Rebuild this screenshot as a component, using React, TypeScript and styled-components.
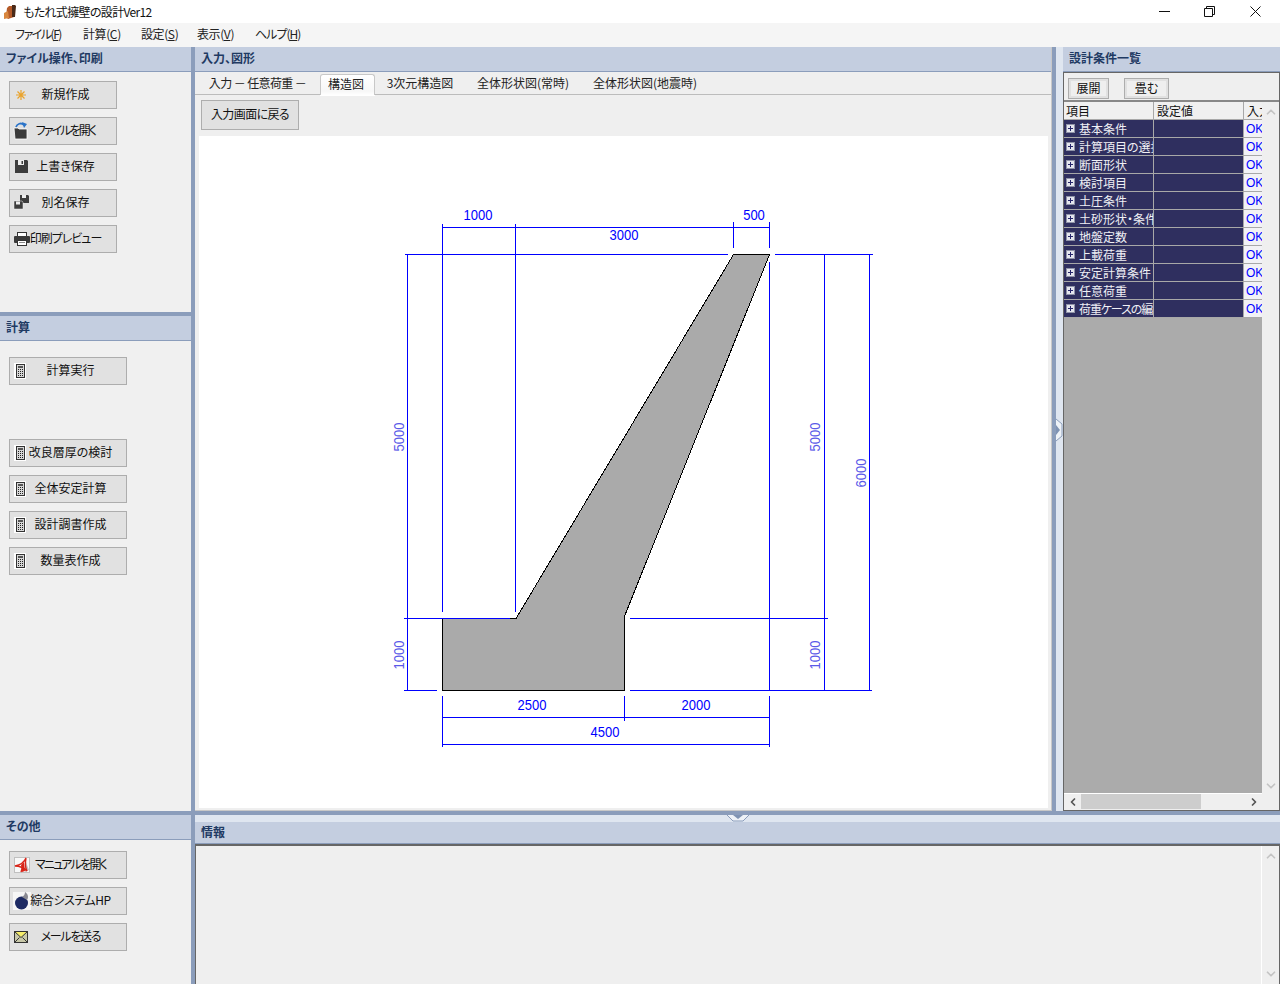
import React from "react";
import styled, { createGlobalStyle } from "styled-components";
import { ChevronUp, ChevronDown, ChevronLeft, ChevronRight } from "lucide-react";

const Global = createGlobalStyle`
  html, body { margin: 0; padding: 0; overflow: hidden; background: #f0f0f0; }
  * { box-sizing: border-box; }
  body {
    font-family: "Noto Sans CJK JP", "Liberation Sans", sans-serif;
    font-size: 12px;
    font-feature-settings: "palt";
    color: #111;
  }
`;

const Win = styled.div`
  width: 1280px; height: 984px;
  display: grid;
  grid-template-rows: 23px 24px 1fr;
  overflow: hidden;
`;
const TitleBar = styled.div`
  background: #fff; display: flex; align-items: center; padding: 0 2px 0 3px;
`;
const TitleText = styled.span`
  margin-left: 4px; flex: 1; line-height: 23px; color: #111; letter-spacing: -0.65px;
`;
const WinBtn = styled.span`
  width: 45.5px; height: 23px; display: flex; align-items: center; justify-content: center;
`;
const MenuBar = styled.div`
  background: #f5f5f5; display: flex; align-items: center; padding-left: 15px;
`;
const MenuItem = styled.span<{ $w: number; $ls?: number }>`
  width: ${(p) => p.$w}px; line-height: 22px; height: 24px; color: #222; white-space: nowrap;
  letter-spacing: ${(p) => p.$ls ?? -0.4}px;
  u { text-underline-offset: 1px; }
`;
const Work = styled.div`
  display: grid; grid-template-columns: 191px 4px 1fr; min-height: 0; position: relative;
`;
const VSplit = styled.div` background: #8b9dbb; `;
const HSplit = styled.div` background: #8b9dbb; height: 4px; flex: none; `;
const LeftCol = styled.div` display: flex; flex-direction: column; min-height: 0; `;
const Section = styled.section<{ $h: number; $pt: number }>`
  height: ${(p) => p.$h}px; flex: none; background: #f0f0f0;
  display: flex; flex-direction: column; align-items: flex-start;
  > div:last-child { padding-top: ${(p) => p.$pt}px; }
`;
const Header = styled.div<{ $h?: number; $px?: number }>`
  height: ${(p) => p.$h ?? 25}px; width: 100%; flex: none;
  background: #c4cee0; border-bottom: 1px solid #8b9dbb;
  font-weight: 700; color: #1f3a63; line-height: ${(p) => (p.$h ?? 25) - 3}px;
  padding-left: ${(p) => p.$px ?? 6}px;
`;
const BtnList = styled.div`
  display: flex; flex-direction: column; gap: 8px; padding-left: 9px;
`;
const ActionBtn = styled.button<{ $w: number; $mt?: number; $ls?: number }>`
  width: ${(p) => p.$w}px; height: 28px; margin: ${(p) => p.$mt ?? 0}px 0 0; padding: 0 0 0 5px;
  background: #e1e1e1; border: 1px solid #adadad;
  display: grid; align-items: center;
  font: inherit; color: #111;
  > * { grid-area: 1 / 1; }
  > svg { justify-self: start; margin-left: -2px; }
  > span {
    justify-self: center; white-space: nowrap; padding-bottom: 3px;
    letter-spacing: ${(p) => p.$ls ?? 0}px;
  }
`;
const MainCol = styled.div` display: flex; flex-direction: column; min-width: 0; min-height: 0; `;
const TopRow = styled.div`
  height: 764px; flex: none; display: grid; grid-template-columns: 857px 4px 7px 1fr;
`;
const Center = styled.div`
  display: flex; flex-direction: column; background: #efefef; min-height: 0;
  border-right: 1px solid #c8c8c8; border-bottom: 1px solid #c8c8c8;
`;
const Tabs = styled.div`
  height: 23px; flex: none; display: flex; align-items: flex-end; background: #efefef;
  border-bottom: 1px solid #bcbcbc;
`;
const Tab = styled.div<{ $w: number; $active?: boolean; $ls?: number }>`
  width: ${(p) => p.$w}px; height: ${(p) => (p.$active ? "21px" : "20px")}; text-align: center;
  line-height: 17px; white-space: nowrap; color: #222;
  letter-spacing: ${(p) => p.$ls ?? 0}px;
  ${(p) =>
    p.$active
      ? `padding-right: 3px; background: linear-gradient(#fff, #f7f7f7 80%, #fff); border: 1px solid #c8c8c8; border-bottom: 0; border-radius: 3px 3px 0 0; margin-bottom: -1px; box-shadow: 0 1px 0 #fff;`
      : ""}
`;
const ToolRow = styled.div` height: 41px; flex: none; padding: 5px 0 0 6px; `;
const PlainBtn = styled.button`
  width: 98px; height: 30px; background: #e1e1e1; border: 1px solid #adadad;
  padding: 0 0 3px; font: inherit; color: #111; white-space: nowrap; letter-spacing: -0.6px;
`;
const Canvas = styled.div`
  margin: 0 3px 0 4px; height: 672px; background: #fff; flex: none;
  svg { display: block; }
`;
const Strip = styled.div` background: #dfe6f0; `;
const Right = styled.div` display: flex; flex-direction: column; background: #efefef; min-height: 0; `;
const RightFrame = styled.div`
  flex: 1; min-height: 0; display: flex; flex-direction: column;
  border: 1px solid #666;
`;
const RightTools = styled.div`
  height: 29px; flex: none; display: flex; gap: 15px; padding: 5px 0 0 4px; border-bottom: 2px solid #888;
`;
const MiniBtn = styled.button<{ $w: number }>`
  width: ${(p) => p.$w}px; height: 21px; padding: 0 0 2px; font: inherit; color: #111;
  background: #efefef; border: 1px solid #adadad; box-shadow: inset 0 0 0 2px #e1e1e1;
`;
const RightBody = styled.div` flex: 1; min-height: 0; display: grid; grid-template-columns: 198px 1fr; `;
const TableCol = styled.div` display: flex; flex-direction: column; min-height: 0; `;
const TableArea = styled.div` flex: 1; background: #ababab; border-bottom: 1px solid #fff; min-height: 0; `;
const Row = styled.div`
  display: grid; grid-template-columns: 90px 90px 18px; height: 18px;
  border-bottom: 1px solid #a8a8a8;
`;
const HeadRow = styled(Row)` background: #f0f0f0; `;
const HeadCell = styled.div<{ $pl: number; $line?: boolean }>`
  padding-left: ${(p) => p.$pl}px; line-height: 17px; overflow: hidden; white-space: nowrap; color: #111;
  ${(p) => (p.$line ? "border-right: 1px solid #a8a8a8;" : "")}
`;
const NameCell = styled.div<{ $tight?: boolean }>`
  background: #2f2f5f; color: #f0f0f5; display: flex; align-items: center; gap: 4px;
  padding-left: 2px; overflow: hidden; white-space: nowrap; border-right: 1px solid #a8a8a8; line-height: 17px;
  letter-spacing: ${(p) => (p.$tight ? "-1.1px" : "0")};
`;
const Plus = styled.span`
  width: 9px; height: 9px; flex: none; background: #e4e6ee; border: 1px solid #8f93a8; position: relative;
  &::before, &::after { content: ""; position: absolute; background: #24246a; }
  &::before { left: 1px; right: 1px; top: 3px; height: 1px; }
  &::after { top: 1px; bottom: 1px; left: 3px; width: 1px; }
`;
const ValueCell = styled.div` background: #2f2f5f; border-right: 1px solid #a8a8a8; `;
const OkCell = styled.div`
  background: #f2f2f6; color: #0000ff; padding-left: 2px; line-height: 19px; overflow: hidden;
  font-family: "Liberation Sans", sans-serif; font-size: 12px;
`;
const HScroll = styled.div`
  height: 16px; flex: none; display: grid; grid-template-columns: 17px 120px 1fr 17px; align-items: stretch;
  color: #555; > span { display: flex; align-items: center; justify-content: center; }
`;
const Thumb = styled.div` background: #cdcdcd; margin-bottom: 1px; `;
const VScroll = styled.div`
  display: flex; flex-direction: column; justify-content: space-between; align-items: center;
  color: #c4c4c4; padding: 3px 0;
`;
const BottomSplit = styled.div` height: 4px; flex: none; background: #8b9dbb; `;
const BottomStrip = styled.div` height: 7px; flex: none; background: #dfe6f0; `;
const Info = styled.div`
  flex: 1; min-height: 0; background: #efefef; display: grid; grid-template-columns: 1fr 17px;
  border: 1px solid #666; border-top-width: 2px; border-bottom: 0;
`;
const InfoBody = styled.div` border-right: 1px solid #fff; `;
const Grip = styled.svg<{ $x: number; $y: number }>`
  position: absolute; left: ${(p) => p.$x}px; top: ${(p) => p.$y}px; display: block;
`;

const Calc = () => (
  <svg width="14" height="16" viewBox="0 0 14 16">
    <rect x="1" y="0" width="12" height="16" fill="#fff" />
    <rect x="3.5" y="1.5" width="8" height="13" fill="#d8d8d8" stroke="#333" />
    <rect x="5" y="3" width="5" height="2" fill="#555" />
    {[6.5, 8.5, 10.5, 12.5].map((y) => (
      <path key={y} d={`M5 ${y}h1M7 ${y}h1M9 ${y}h1`} stroke="#222" />
    ))}
  </svg>
);
const Star = () => (
  <svg width="18" height="16" viewBox="0 0 18 16">
    <path d="M8 3v10M3 8h10M4.5 4.5l7 7M11.5 4.5l-7 7" stroke="#e9a32c" strokeWidth="1.2" />
  </svg>
);
const OpenIcon = () => (
  <svg width="18" height="18" viewBox="0 0 18 18">
    <path d="M1 6h4l1 1h8v10H2z" fill="#3a3a3a" stroke="#fff" strokeWidth="0.8" />
    <path d="M3 5c1-3 5-5 8-2" fill="none" stroke="#2a73c8" strokeWidth="1.8" />
    <path d="M9 0l5 2-3 4z" fill="#2a73c8" />
  </svg>
);
const SaveIcon = () => (
  <svg width="18" height="16" viewBox="0 0 18 16">
    <path d="M2 1h12l1 1v12H2z" fill="#3d3d3d" />
    <rect x="5" y="1" width="6" height="5" fill="#eee" />
    <rect x="8.5" y="2" width="1.5" height="3" fill="#3d3d3d" />
  </svg>
);
const SaveAsIcon = () => (
  <svg width="18" height="16" viewBox="0 0 18 16">
    <path d="M7 0h8l1 1v7H7z" fill="#3d3d3d" />
    <rect x="9" y="0" width="4" height="3" fill="#eee" />
    <path d="M1 6h8l1 1v7H1z" fill="#3d3d3d" stroke="#f0f0f0" strokeWidth="0.5" />
    <rect x="3" y="6.5" width="4" height="3" fill="#eee" />
  </svg>
);
const PrintIcon = () => (
  <svg width="18" height="16" viewBox="0 0 18 16">
    <rect x="4.5" y="1.5" width="9" height="4" fill="#fff" stroke="#333" />
    <rect x="1" y="5" width="16" height="7" rx="1" fill="#3a3a3a" />
    <rect x="4.5" y="9.5" width="9" height="5" fill="#fff" stroke="#333" />
    <path d="M6 11.5h6" stroke="#888" />
  </svg>
);
const PdfIcon = () => (
  <svg width="18" height="18" viewBox="0 0 18 18">
    <rect x="1.5" y="1.5" width="15" height="15" fill="#f8f8f8" stroke="#c0c0c0" />
    <path d="M12 2c1 3 2 8 4 12l-4 2z" fill="#c0c0c0" />
    <path d="M2 10c5-1 9-3 11-8-1 5-1 9 1 13-3-3-7-5-12-5zM8 16l2-6" fill="none" stroke="#d82418" strokeWidth="1.4" />
    <path d="M8 9l3-3 1 9-3 1z" fill="#d82418" />
  </svg>
);
const BallIcon = () => (
  <svg width="18" height="18" viewBox="0 0 18 18">
    <rect width="18" height="18" fill="#f6f6f6" />
    <circle cx="8.5" cy="11" r="6.5" fill="#1d2a63" />
    <path d="M9 5c2-1 3-3 3-5 3 2 4 5 2 8z" fill="#8a8a92" />
  </svg>
);
const MailIcon = () => (
  <svg width="18" height="14" viewBox="0 0 18 14">
    <rect x="1.5" y="1.5" width="13" height="11" fill="#c8c8a8" stroke="#333" />
    <path d="M1.5 12.5l5-5M14.5 12.5l-5-5" stroke="#333" fill="none" />
    <path d="M1.5 1.5l6.5 6 6.5-6z" fill="#f6ee6a" stroke="#333" />
  </svg>
);
const BookIcon = () => (
  <svg width="16" height="16" viewBox="0 0 16 16">
    <path d="M6 2h3l3 1-1 10-6 2-2-2 1-9z" fill="#b45a28" />
    <path d="M9 1h3l1 1-1 11H9z" fill="#4a2a18" />
    <path d="M1 9l4-2 1 7-5 1z" fill="#d9873f" />
  </svg>
);

const btn1: [React.ReactNode, string, number][] = [
  [<Star />, "新規作成", 0],
  [<OpenIcon />, "ファイルを開く", -1.9],
  [<SaveIcon />, "上書き保存", 0],
  [<SaveAsIcon />, "別名保存", 0],
  [<PrintIcon />, "印刷プレビュー", -1],
];
const btn2 = ["計算実行", "改良層厚の検討", "全体安定計算", "設計調書作成", "数量表作成"];
const btn3: [React.ReactNode, string, number][] = [
  [<PdfIcon />, "マニュアルを開く", -1.75],
  [<BallIcon />, "綜合システムHP", -0.45],
  [<MailIcon />, "メールを送る", -1.3],
];
const rows = [
  "基本条件", "計算項目の選択", "断面形状", "検討項目", "土圧条件", "土砂形状・条件",
  "地盤定数", "上載荷重", "安定計算条件", "任意荷重", "荷重ケースの編集",
];

const DimLines = [
  "M442.5 224V612", "M515.5 224V612", "M733.5 222V248", "M769.5 222V248", "M769.5 262V690",
  "M442 227.5H770", "M405 254.5H728", "M775 254.5H873", "M824.5 254V690", "M869.5 254V690",
  "M407.5 254V690", "M404 618.5H510", "M630 618.5H828", "M404 690.5H437", "M630 690.5H872",
  "M442.5 696V747", "M624.5 696V721", "M769.5 696V747", "M442 717.5H770", "M442 744.5H770",
];
const Labels: [number, number, string][] = [
  [478, 220, "1000"], [754, 220, "500"], [624, 240, "3000"], [532, 710, "2500"], [696, 710, "2000"], [605, 737, "4500"],
];
const VLabels: [number, number, string][] = [
  [404, 437, "5000"], [404, 655, "1000"], [820, 437, "5000"], [820, 655, "1000"], [866, 473, "6000"],
];
const Digit = styled.text<{ $soft?: boolean }>`
  font-family: "Liberation Sans", sans-serif; font-size: 13px; font-weight: 400;
  font-feature-settings: normal;
  fill: ${(p) => (p.$soft ? "#5a5ae8" : "#0000ff")}; text-anchor: middle;
`;

const Diagram = () => (
  <svg width="849" height="672" viewBox="199 136 849 672">
    <polygon
      points="442.5,618.5 516,618.5 733.5,254.5 769.5,254.5 625,615 624.5,690.5 442.5,690.5"
      fill="#aaa" stroke="#000" shapeRendering="crispEdges"
    />
    <path d={DimLines.join("")} stroke="#0000ff" fill="none" shapeRendering="crispEdges" />
    {Labels.map(([x, y, t]) => (
      <Digit key={`${x}${y}`} transform={`translate(${x} ${y}) scale(1 1.16)`}>{t}</Digit>
    ))}
    {VLabels.map(([x, y, t]) => (
      <Digit key={`${x}${y}`} $soft transform={`translate(${x} ${y}) rotate(-90) scale(1 1.16)`}>{t}</Digit>
    ))}
  </svg>
);

export default function App() {
  return (
    <Win>
      <Global />
      <TitleBar>
        <BookIcon />
        <TitleText>もたれ式擁壁の設計Ver12</TitleText>
        <WinBtn>
          <svg width="11" height="11" viewBox="0 0 11 11"><path d="M0 5.5h11" stroke="#111" /></svg>
        </WinBtn>
        <WinBtn>
          <svg width="11" height="11" viewBox="0 0 11 11"><path d="M.5 2.5h8v8h-8zM2.5 2.5v-2h8v8h-2" fill="none" stroke="#111" /></svg>
        </WinBtn>
        <WinBtn>
          <svg width="11" height="11" viewBox="0 0 11 11"><path d="M.5.5l10 10M10.5.5l-10 10" stroke="#111" /></svg>
        </WinBtn>
      </TitleBar>
      <MenuBar>
        <MenuItem $w={68} $ls={-1.5}>ファイル(<u>F</u>)</MenuItem>
        <MenuItem $w={58}>計算(<u>C</u>)</MenuItem>
        <MenuItem $w={56}>設定(<u>S</u>)</MenuItem>
        <MenuItem $w={58}>表示(<u>V</u>)</MenuItem>
        <MenuItem $w={60} $ls={-1}>ヘルプ(<u>H</u>)</MenuItem>
      </MenuBar>
      <Work>
        <LeftCol>
          <Section $h={265} $pt={9}>
            <Header>ファイル操作、印刷</Header>
            <BtnList>
              {btn1.map(([icon, label, ls]) => (
                <ActionBtn key={label} $w={108} $ls={ls}>{icon}<span>{label}</span></ActionBtn>
              ))}
            </BtnList>
          </Section>
          <HSplit />
          <Section $h={495} $pt={16}>
            <Header>計算</Header>
            <BtnList>
              {btn2.map((label, i) => (
                <ActionBtn key={label} $w={118} $mt={i === 1 ? 46 : 0}><Calc /><span>{label}</span></ActionBtn>
              ))}
            </BtnList>
          </Section>
          <HSplit />
          <Section $h={169} $pt={11}>
            <Header>その他</Header>
            <BtnList>
              {btn3.map(([icon, label, ls]) => (
                <ActionBtn key={label} $w={118} $ls={ls}>{icon}<span>{label}</span></ActionBtn>
              ))}
            </BtnList>
          </Section>
        </LeftCol>
        <VSplit />
        <MainCol>
          <TopRow>
            <Center>
              <Header>入力、図形</Header>
              <Tabs>
                <Tab $w={125} $ls={-0.6}>入力 － 任意荷重 －</Tab>
                <Tab $w={55} $active>構造図</Tab>
                <Tab $w={90}>3次元構造図</Tab>
                <Tab $w={116}>全体形状図(常時)</Tab>
                <Tab $w={128}>全体形状図(地震時)</Tab>
              </Tabs>
              <ToolRow><PlainBtn>入力画面に戻る</PlainBtn></ToolRow>
              <Canvas><Diagram /></Canvas>
            </Center>
            <VSplit />
            <Strip />
            <Right>
              <Header $px={6}>設計条件一覧</Header>
              <RightFrame>
                <RightTools>
                  <MiniBtn $w={41}>展開</MiniBtn>
                  <MiniBtn $w={45}>畳む</MiniBtn>
                </RightTools>
                <RightBody>
                  <TableCol>
                    <TableArea>
                      <HeadRow>
                        <HeadCell $pl={2} $line>項目</HeadCell>
                        <HeadCell $pl={3} $line>設定値</HeadCell>
                        <HeadCell $pl={3}>入力</HeadCell>
                      </HeadRow>
                      {rows.map((r) => (
                        <Row key={r}>
                          <NameCell $tight={r.includes("ケース")}><Plus />{r}</NameCell>
                          <ValueCell />
                          <OkCell>OK</OkCell>
                        </Row>
                      ))}
                    </TableArea>
                    <HScroll>
                      <span><ChevronLeft size={12} strokeWidth={3.5} /></span>
                      <Thumb />
                      <i />
                      <span><ChevronRight size={12} strokeWidth={3.5} /></span>
                    </HScroll>
                  </TableCol>
                  <VScroll>
                    <ChevronUp size={14} strokeWidth={3} />
                    <ChevronDown size={14} strokeWidth={3} style={{ marginBottom: 14 }} />
                  </VScroll>
                </RightBody>
              </RightFrame>
            </Right>
          </TopRow>
          <BottomSplit />
          <BottomStrip />
          <Header $h={22}>情報</Header>
          <Info>
            <InfoBody />
            <VScroll>
              <ChevronUp size={14} strokeWidth={3} />
              <ChevronDown size={14} strokeWidth={3} />
            </VScroll>
          </Info>
        </MainCol>
        <Grip $x={1056} $y={371} width="7" height="24" viewBox="0 0 7 24">
          <path d="M0 1l6 5v12l-6 5" fill="#eef2f7" stroke="#8b9dbb" />
          <path d="M0 7l4 5-4 5z" fill="#7f93b3" />
        </Grip>
        <Grip $x={727} $y={768} width="22" height="7" viewBox="0 0 22 7">
          <path d="M0 0l6 6h10l6-6" fill="#eef2f7" stroke="#8b9dbb" />
          <path d="M6 0h10l-5 4z" fill="#7f93b3" />
        </Grip>
      </Work>
    </Win>
  );
}
